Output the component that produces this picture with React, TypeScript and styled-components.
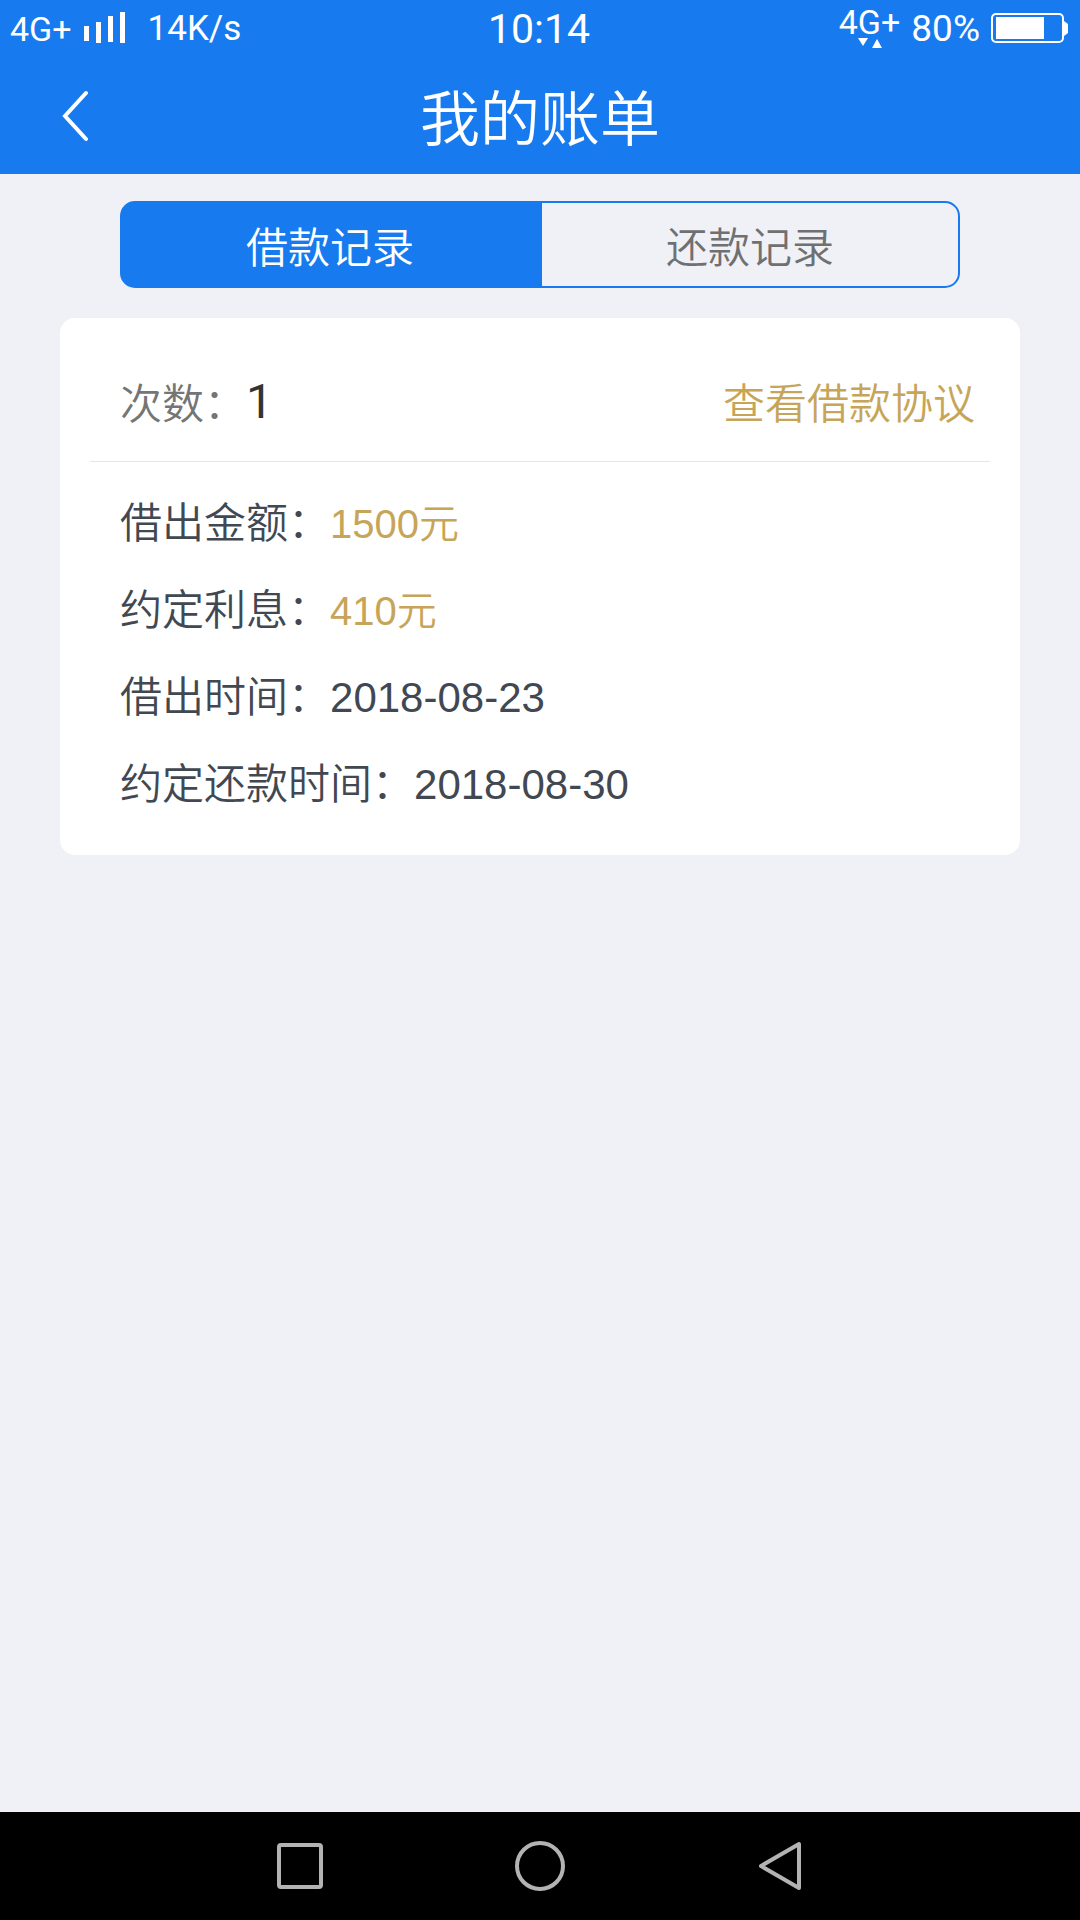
import React, { useState } from 'react';
import styled, { createGlobalStyle } from 'styled-components';

const cjk = '"Noto Sans CJK SC", sans-serif';
const blue = '#187aef';
const gold = '#c7a558';

const GlobalStyle = createGlobalStyle`
  * {
    box-sizing: border-box;
  }
  body {
    margin: 0;
    background: #f0f1f6;
    font-family: "Liberation Sans", ${cjk};
    font-weight: 350;
  }
  button {
    margin: 0;
    padding: 0;
    border: 0;
    background: none;
    color: inherit;
    font: inherit;
    cursor: pointer;
  }
`;

const Screen = styled.div`
  display: flex;
  flex-direction: column;
  min-height: 100vh;
`;

const Top = styled.header`
  background: ${blue};
  color: #fff;
`;

const StatusBar = styled.div`
  display: grid;
  grid-template-columns: 1fr auto 1fr;
  align-items: center;
  height: 56px;
  padding: 0 12px 0 10px;
  font-family: Roboto, ${cjk};
  font-weight: 400;
  white-space: nowrap;
`;

const StatusGroup = styled.div<{ $end?: boolean }>`
  display: flex;
  align-items: center;
  justify-content: ${(p) => (p.$end ? 'flex-end' : 'flex-start')};
  gap: 11px;
`;

const StatusText = styled.span<{ $size: number }>`
  padding-top: 2px;
  font-size: ${(p) => p.$size}px;
  line-height: 54px;
`;

const Speed = styled(StatusText)`
  margin-left: 12px;
`;

const Network = styled.span`
  display: flex;
  flex-direction: column;
  align-items: center;
  padding-bottom: 2px;
  font-size: 34px;
  line-height: 32px;
`;

const Icon = styled.svg`
  display: block;
  flex: none;
`;

const TitleBar = styled.div`
  display: grid;
  grid-template-columns: 150px 1fr 150px;
  align-items: center;
  height: 118px;
`;

const BackButton = styled.button`
  display: flex;
  align-items: center;
  justify-content: center;
  height: 118px;
  padding-top: 2px;
`;

const Title = styled.h1`
  margin: 0;
  font: 350 60px/118px ${cjk};
  text-align: center;
`;

const Content = styled.main`
  flex: 1;
  padding: 27px 60px;
`;

const Tabs = styled.div`
  display: grid;
  grid-template-columns: 1fr 1fr;
  margin: 0 60px 30px;
`;

const Tab = styled.button<{ $active: boolean }>`
  height: 87px;
  border: 2px solid ${blue};
  background: ${(p) => (p.$active ? blue : 'transparent')};
  color: ${(p) => (p.$active ? '#fff' : '#6f7072')};
  font: 350 42px/82px ${cjk};

  &:first-child {
    border-radius: 15px 0 0 15px;
  }
  &:last-child {
    border-radius: 0 15px 15px 0;
  }
`;

const Card = styled.section`
  padding: 0 30px 26px;
  border-radius: 15px;
  background: #fff;
`;

const CardHead = styled.div`
  display: flex;
  align-items: center;
  justify-content: space-between;
  height: 144px;
  padding: 30px 15px 0 30px;
  border-bottom: 1px solid #e6e7e9;
  font-size: 42px;
`;

const Count = styled.p`
  display: flex;
  align-items: center;
  margin: 0;
  color: #757575;
  line-height: 60px;
`;

const CountValue = styled.span`
  padding-bottom: 6px;
  color: #333;
  font: 400 48px/56px Roboto, ${cjk};
`;

const Agreement = styled.a`
  color: ${gold};
  line-height: 60px;
  text-decoration: none;
`;

const Details = styled.dl`
  margin: 0;
  padding: 19px 30px 0;
  font-size: 42px;
  line-height: 86px;
`;

const Row = styled.div`
  display: flex;
  align-items: baseline;
  height: 87px;
  color: #414852;
`;

const Value = styled.dd<{ $money?: boolean }>`
  margin: 0;
  color: ${(p) => (p.$money ? gold : 'inherit')};
  font-size: ${(p) => (p.$money ? 40 : 42)}px;
`;

const NavBar = styled.nav`
  display: grid;
  grid-template-columns: repeat(3, 1fr);
  padding: 0 calc(100% / 6);
  background: #000;
`;

const NavButton = styled.button`
  display: flex;
  align-items: center;
  justify-content: center;
  height: 108px;
`;

const rows = [
  { label: '借出金额', value: '1500元', money: true },
  { label: '约定利息', value: '410元', money: true },
  { label: '借出时间', value: '2018-08-23', money: false },
  { label: '约定还款时间', value: '2018-08-30', money: false },
];

const tabs = ['借款记录', '还款记录'];

export default function App() {
  const [active, setActive] = useState(0);

  return (
    <Screen lang="zh-CN">
      <GlobalStyle />
      <Top>
        <StatusBar>
          <StatusGroup>
            <StatusText $size={34}>4G+</StatusText>
            <Icon width="42" height="32" viewBox="0 0 42 32" fill="#fff" aria-hidden="true">
              <rect x="1" y="14" width="5" height="15" />
              <rect x="13" y="10" width="5" height="21" />
              <rect x="25" y="4" width="5" height="26" />
              <rect x="37" y="0" width="5" height="31" />
            </Icon>
            <Speed $size={35}>14K/s</Speed>
          </StatusGroup>
          <StatusText $size={41}>10:14</StatusText>
          <StatusGroup $end>
            <Network>
              4G+
              <Icon width="24" height="10" viewBox="0 0 24 10" fill="#fff" aria-hidden="true">
                <path d="M0 0H10L5 8Z" />
                <path d="M14 10H24L19 1Z" />
              </Icon>
            </Network>
            <StatusText $size={37}>80%</StatusText>
            <Icon width="77" height="30" viewBox="0 0 77 30" aria-hidden="true">
              <rect x="1" y="1" width="71" height="28" rx="4" fill="none" stroke="#fff" strokeWidth="2" />
              <rect x="5" y="4" width="48" height="22" fill="#fff" />
              <path d="M73 8L77 11V20L73 23Z" fill="#fff" />
            </Icon>
          </StatusGroup>
        </StatusBar>
        <TitleBar>
          <BackButton type="button" aria-label="返回">
            <Icon width="26" height="52" viewBox="0 0 26 52" fill="none" stroke="#fff" strokeWidth="4" strokeLinecap="round">
              <path d="M24 3L3 26L24 49" />
            </Icon>
          </BackButton>
          <Title>我的账单</Title>
        </TitleBar>
      </Top>

      <Content>
        <Tabs role="tablist">
          {tabs.map((name, i) => (
            <Tab
              key={name}
              type="button"
              role="tab"
              aria-selected={active === i}
              $active={active === i}
              onClick={() => setActive(i)}
            >
              {name}
            </Tab>
          ))}
        </Tabs>

        <Card>
          <CardHead>
            <Count>
              次数：<CountValue>1</CountValue>
            </Count>
            <Agreement href="#agreement">查看借款协议</Agreement>
          </CardHead>
          <Details>
            {rows.map((row) => (
              <Row key={row.label}>
                <dt>{row.label}：</dt>
                <Value $money={row.money}>{row.value}</Value>
              </Row>
            ))}
          </Details>
        </Card>
      </Content>

      <NavBar>
        <NavButton type="button" aria-label="最近任务">
          <Icon width="46" height="46" viewBox="0 0 46 46" fill="none" stroke="#b3b3b3" strokeWidth="4">
            <rect x="2" y="2" width="42" height="42" rx="2" />
          </Icon>
        </NavButton>
        <NavButton type="button" aria-label="主屏幕">
          <Icon width="50" height="50" viewBox="0 0 50 50" fill="none" stroke="#b3b3b3" strokeWidth="4">
            <circle cx="25" cy="25" r="23" />
          </Icon>
        </NavButton>
        <NavButton type="button" aria-label="后退">
          <Icon width="44" height="50" viewBox="0 0 44 50" fill="none" stroke="#b3b3b3" strokeWidth="4" strokeLinejoin="round">
            <path d="M41 3V47L3 25Z" />
          </Icon>
        </NavButton>
      </NavBar>
    </Screen>
  );
}
